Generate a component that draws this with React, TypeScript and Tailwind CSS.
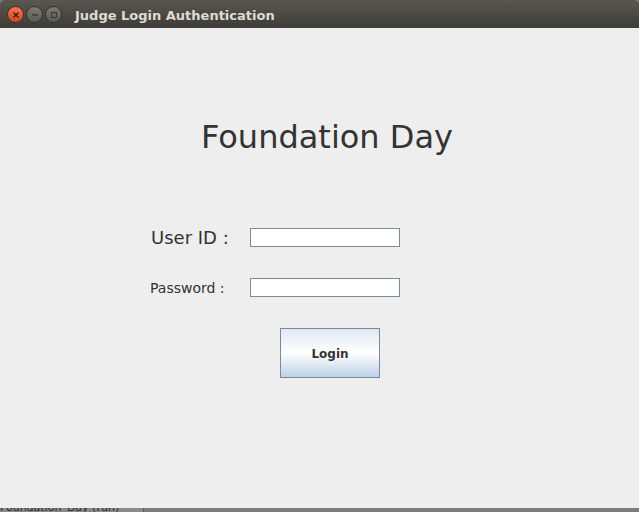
const dv = { fontFamily: '"DejaVu Sans", "Liberation Sans", sans-serif' };

function WinButton({ kind }: { kind: "close" | "min" | "max" }) {
  if (kind === "close") {
    return (
      <div className="w-[17px] h-[17px] rounded-full bg-gradient-to-b from-[#f4764a] to-[#d9441a] border border-[#3a2f2a] flex items-center justify-center">
        <svg width="8" height="8" viewBox="0 0 8 8">
          <path d="M1.5 1.5 L6.5 6.5 M6.5 1.5 L1.5 6.5" stroke="#3b1a0e" strokeWidth="1.4" />
        </svg>
      </div>
    );
  }
  return (
    <div className="w-[17px] h-[17px] rounded-full bg-gradient-to-b from-[#7c7a74] to-[#5c5a55] border border-[#33322e] flex items-center justify-center">
      <svg width="8" height="8" viewBox="0 0 8 8">
        {kind === "min" ? (
          <path d="M1 4 H7" stroke="#3a3935" strokeWidth="1.4" />
        ) : (
          <rect x="1.5" y="1.5" width="5" height="5" fill="none" stroke="#3a3935" strokeWidth="1.2" />
        )}
      </svg>
    </div>
  );
}

export default function App() {
  return (
    <div className="w-[639px] h-[512px] flex flex-col bg-[#7a7a7a] overflow-hidden" style={dv}>
      {/* title bar */}
      <div className="h-[28px] shrink-0 flex items-center rounded-t-[5px] bg-gradient-to-b from-[#5b5750] to-[#3d3c38] pl-[7px] pt-[1px]">
        <div className="flex items-center gap-[2px]">
          <WinButton kind="close" />
          <WinButton kind="min" />
          <WinButton kind="max" />
        </div>
        <span className="ml-[13px] pt-[2px] text-[13px] font-bold text-[#dfdbd2]">Judge Login Authentication</span>
      </div>

      {/* content */}
      <div className="h-[480px] shrink-0 bg-[#eeeeee] pt-[90px]">
        <h1 className="pl-[201px] text-[32px] leading-[38px] h-[38px] text-[#333333] font-normal">Foundation Day</h1>

        <div className="mt-[72px] flex items-center h-[19px]">
          <span className="w-[250px] pl-[151px] text-[18px] leading-[19px] text-[#333333]">User ID :</span>
          <div className="w-[150px] h-[19px] bg-white border border-[#7a8a99]" />
        </div>

        <div className="mt-[31px] flex items-center h-[19px]">
          <span className="w-[250px] pl-[150px] pt-[2px] text-[14px] leading-[19px] text-[#333333]">Password :</span>
          <div className="w-[150px] h-[19px] bg-white border border-[#7a8a99]" />
        </div>

        <div className="mt-[31px] pl-[280px]">
          <button className="w-[100px] h-[50px] pt-[2px] border border-[#7a8a9a] bg-gradient-to-b from-[#dfe8f3] via-[#ffffff] to-[#bdd0e6] text-[12px] font-bold text-[#333333]">
            Login
          </button>
        </div>
      </div>

      {/* taskbar sliver */}
      <div className="h-[4px] shrink-0 flex">
        <div className="w-[144px] bg-[#8a8a88] border-r border-[#5a5a5a] overflow-hidden">
          <div className="-mt-[6px] text-[11px] leading-[11px] text-[#2a2a2a] whitespace-nowrap">Foundation_Day (run)</div>
        </div>
        <div className="flex-1 bg-[#7c7c7c]" />
      </div>
    </div>
  );
}
